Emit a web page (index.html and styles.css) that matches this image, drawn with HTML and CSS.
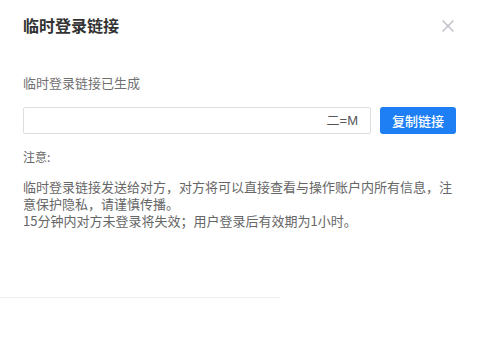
FILE: index.html
```html
<!DOCTYPE html>
<html lang="zh-CN">
<head>
<meta charset="utf-8">
<link rel="stylesheet" href="styles.css">
</head>
<body>
<div class="dialog">
  <div class="header">
    <div class="title">临时登录链接</div>
    <svg class="close" width="14" height="14" viewBox="0 0 14 14"><path d="M1.5 1.5 L12.5 12.5 M12.5 1.5 L1.5 12.5" stroke="#bbbec4" stroke-width="1.4" fill="none"/></svg>
  </div>
  <div class="content">
    <div class="subtitle">临时登录链接已生成</div>
    <div class="row">
      <div class="link-box"><span class="link-text">二=M</span></div>
      <button class="copy-btn">复制链接</button>
    </div>
    <div class="note">注意:</div>
    <div class="para">
      <div class="para-line">临时登录链接发送给对方，对方将可以直接查看与操作账户内所有信息，注意保护隐私，请谨慎传播。</div>
      <div class="para-line">15分钟内对方未登录将失效；用户登录后有效期为1小时。</div>
    </div>
  </div>
  <div class="footer-line"></div>
</div>
</body>
</html>
```
FILE: styles.css
```css
html, body {
  margin: 0;
  padding: 0;
  background: #fff;
}
body {
  font-family: "Noto Sans CJK SC", "Noto Sans", sans-serif;
  width: 479px;
  height: 356px;
  overflow: hidden;
}
.dialog {
  width: 479px;
}
.header {
  display: flex;
  justify-content: space-between;
  align-items: center;
  padding: 16px 24px 0 23px;
  height: 18px;
}
.title {
  font-size: 16px;
  line-height: 18px;
  font-weight: 700;
  color: #333;
}
.close {
  margin-top: 2px;
}
.content {
  padding: 0 23px;
}
.subtitle {
  margin-top: 40px;
  font-size: 13px;
  line-height: 18px;
  color: #707070;
}
.row {
  margin-top: 15px;
  display: flex;
  gap: 9px;
  height: 27px;
}
.link-box {
  flex: 1;
  border: 1px solid #dedede;
  border-radius: 2px;
  display: flex;
  justify-content: flex-end;
  align-items: center;
  overflow: hidden;
  padding: 0 12px 0 8px;
  box-sizing: border-box;
  white-space: nowrap;
}
.link-text {
  font-family: "Liberation Sans", "Noto Sans CJK SC", sans-serif;
  font-size: 13px;
  line-height: 16px;
  color: #555;
}
.copy-btn {
  width: 76px;
  border: none;
  border-radius: 3px;
  background: #1e7ff5;
  color: #fff;
  font-family: "Noto Sans CJK SC", sans-serif;
  font-size: 13px;
  font-weight: 500;
  padding: 0;
}
.note {
  margin-top: 14px;
  font-size: 12px;
  line-height: 18px;
  color: #666;
}
.para {
  margin-top: 12px;
  font-size: 13px;
  line-height: 17px;
  color: #666;
}
.footer-line {
  margin-top: 68px;
  width: 280px;
  height: 1px;
  background: #f0f0f0;
}
```
